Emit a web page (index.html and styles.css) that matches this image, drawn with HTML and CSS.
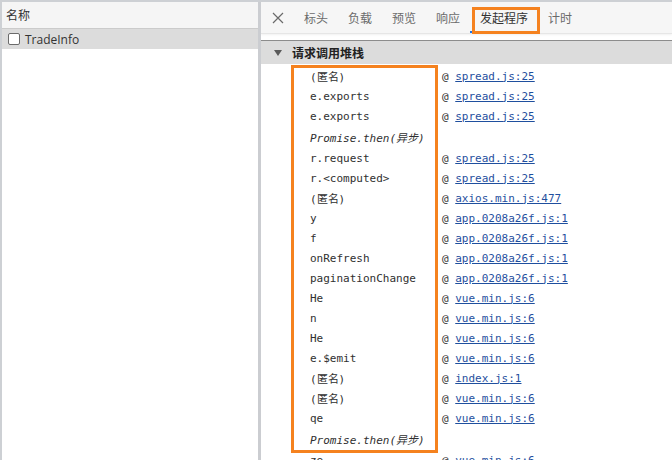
FILE: index.html
```html
<!DOCTYPE html>
<html lang="zh-CN">
<head>
    <meta charset="UTF-8">
    <title>发起程序</title>
    <link rel="stylesheet" href="styles.css">
</head>
<body>
    <!-- 请求列表 -->
    <div class="left">
        <div class="left-head">名称</div>
        <div class="req-row selected"><span class="check"></span>TradeInfo</div>
    </div>

    <!-- 详情面板 -->
    <div class="right">
        <div class="tabs">
            <span class="close">
                <svg width="12" height="12" viewBox="0 0 12 12"><path d="M1 1 L11 11 M11 1 L1 11" stroke="#6a6a6a" stroke-width="1.2" fill="none"/></svg>
            </span>
            <span class="tab">标头</span>
            <span class="tab">负载</span>
            <span class="tab">预览</span>
            <span class="tab">响应</span>
            <span class="tab active">发起程序<span class="mark tab-mark"></span></span>
            <span class="tab">计时</span>
        </div>

        <div class="section-head"><span class="tri"></span>请求调用堆栈</div>

        <div class="stack">
            <div class="mark stack-mark"></div>
            <div class="frame"><span class="fn">(匿名)</span><span class="at">@ <a href="#">spread.js:25</a></span></div>
            <div class="frame"><span class="fn">e.exports</span><span class="at">@ <a href="#">spread.js:25</a></span></div>
            <div class="frame"><span class="fn">e.exports</span><span class="at">@ <a href="#">spread.js:25</a></span></div>
            <div class="frame async"><span class="fn">Promise.then(异步)</span></div>
            <div class="frame"><span class="fn">r.request</span><span class="at">@ <a href="#">spread.js:25</a></span></div>
            <div class="frame"><span class="fn">r.&lt;computed&gt;</span><span class="at">@ <a href="#">spread.js:25</a></span></div>
            <div class="frame"><span class="fn">(匿名)</span><span class="at">@ <a href="#">axios.min.js:477</a></span></div>
            <div class="frame"><span class="fn">y</span><span class="at">@ <a href="#">app.0208a26f.js:1</a></span></div>
            <div class="frame"><span class="fn">f</span><span class="at">@ <a href="#">app.0208a26f.js:1</a></span></div>
            <div class="frame"><span class="fn">onRefresh</span><span class="at">@ <a href="#">app.0208a26f.js:1</a></span></div>
            <div class="frame"><span class="fn">paginationChange</span><span class="at">@ <a href="#">app.0208a26f.js:1</a></span></div>
            <div class="frame"><span class="fn">He</span><span class="at">@ <a href="#">vue.min.js:6</a></span></div>
            <div class="frame"><span class="fn">n</span><span class="at">@ <a href="#">vue.min.js:6</a></span></div>
            <div class="frame"><span class="fn">He</span><span class="at">@ <a href="#">vue.min.js:6</a></span></div>
            <div class="frame"><span class="fn">e.$emit</span><span class="at">@ <a href="#">vue.min.js:6</a></span></div>
            <div class="frame"><span class="fn">(匿名)</span><span class="at">@ <a href="#">index.js:1</a></span></div>
            <div class="frame"><span class="fn">(匿名)</span><span class="at">@ <a href="#">vue.min.js:6</a></span></div>
            <div class="frame"><span class="fn">qe</span><span class="at">@ <a href="#">vue.min.js:6</a></span></div>
            <div class="frame async"><span class="fn">Promise.then(异步)</span></div>
            <div class="frame"><span class="fn">ze</span><span class="at">@ <a href="#">vue.min.js:6</a></span></div>
        </div>
    </div>
</body>
</html>
```

FILE: styles.css
```css
/* 공통 */
html, body {
    height: 100%;
}
body {
    margin: 0;
    display: flex;
    box-sizing: border-box;
    border-top: 2px solid #cdd0d4;
    overflow: hidden;
    font-family: "Noto Sans CJK SC", "Noto Sans", sans-serif;
    font-size: 12px;
    color: #303030;
    background: #fff;
}

/* 왼쪽 요청 목록 */
.left {
    width: 256px;
    flex-shrink: 0;
    border-left: 2px solid #cdd0d4;
    border-right: 3px solid #cbcdd1;
}
.left-head {
    height: 26px;
    line-height: 26px;
    padding-left: 4px;
    background-color: #f5f5f5;
    border-bottom: 1px solid #cbcbcb;
    color: #333;
}
.req-row {
    height: 20px;
    display: flex;
    align-items: center;
    padding-left: 6px;
    font-family: "Open Sans", "Noto Sans", sans-serif;
    color: #333;
}
.req-row.selected {
    background-color: #dcdcdc;
}
.check {
    width: 10px;
    height: 10px;
    border: 1px solid #6b6b6b;
    border-radius: 2px;
    background: #fff;
    margin-right: 5px;
}

/* 오른쪽 상세 */
.right {
    flex: 1;
    min-width: 0;
    overflow: hidden;
}
.tabs {
    height: 31px;
    display: flex;
    align-items: center;
    background-color: #f6f6f6;
    border-bottom: 1px solid #e6e6e6;
    box-shadow: 0 1px 2px rgba(0, 0, 0, 0.06);
}
.close {
    width: 33px;
    display: flex;
    justify-content: center;
    align-items: center;
}
.tab {
    position: relative;
    height: 31px;
    line-height: 31px;
    padding: 0 10px;
    color: #6b6b6b;
}
.tab.active {
    color: #333;
    box-shadow: inset 0 -2px 0 #1a73e8;
}

/* 주석 상자 */
.mark {
    position: absolute;
    border: 3px solid #f5821f;
    box-sizing: border-box;
    pointer-events: none;
}
.tab-mark {
    left: 2px;
    top: 5px;
    width: 68px;
    height: 27px;
}
.stack-mark {
    left: 30px;
    top: 1px;
    width: 147px;
    height: 388px;
}

/* 호출 스택 */
.section-head {
    margin-top: 6px;
    height: 23px;
    display: flex;
    align-items: center;
    border-top: 1px solid #8c8c8c;
    background-color: #dcdcdc;
    font-weight: bold;
    color: #222;
}
.tri {
    width: 0;
    height: 0;
    border-left: 4.5px solid transparent;
    border-right: 4.5px solid transparent;
    border-top: 6px solid #5a5a5a;
    margin: 0 10px 0 13px;
}
.stack {
    position: relative;
    padding-top: 2px;
    font-family: "DejaVu Sans Mono", monospace;
    font-size: 11px;
}
.frame {
    height: 20px;
    display: flex;
    align-items: center;
    padding-left: 49px;
    white-space: nowrap;
}
.frame.async {
    height: 22px;
    font-style: italic;
}
.fn {
    width: 132px;
    color: #303030;
}
.at {
    color: #303030;
}
.at a {
    color: #1f4f9e;
    text-decoration: underline;
}
```
